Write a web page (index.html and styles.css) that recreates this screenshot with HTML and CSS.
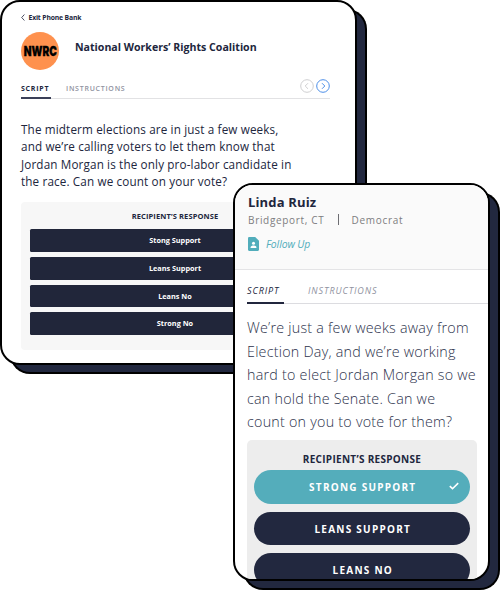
FILE: index.html
```html
<!DOCTYPE html>
<html lang="en">

<head>
    <meta charset="utf-8">
    <title>Phone Bank</title>
    <link rel="stylesheet" href="styles.css">
</head>

<body>
    <div class="canvas">
        <div class="card desktop">
            <a class="exit">
                <svg width="4" height="7" viewBox="0 0 4 7"><path d="M3.4 .5 .7 3.5l2.7 3" /></svg>
                <span>Exit Phone Bank</span>
            </a>
            <div class="org">
                <div class="logo"><span>NWRC</span></div>
                <h1>National Workers’ Rights Coalition</h1>
            </div>
            <div class="tabs">
                <span class="tab active">SCRIPT</span>
                <span class="tab">INSTRUCTIONS</span>
                <div class="arrows">
                    <svg class="prev" width="14" height="14" viewBox="0 0 14 14"><circle cx="7" cy="7" r="6.3" /><path d="M8 4.2 5.2 7 8 9.8" /></svg>
                    <svg class="next" width="14" height="14" viewBox="0 0 14 14"><circle cx="7" cy="7" r="6.3" /><path d="M6 4.2 8.8 7 6 9.8" /></svg>
                </div>
            </div>
            <p class="script">The midterm elections are in just a few weeks,<br>and we’re calling voters to let them know that<br>Jordan Morgan is the only pro-labor candidate in<br>the race. Can we count on your vote?</p>
            <div class="responses">
                <h2>RECIPIENT’S RESPONSE</h2>
                <div class="option">Stong Support</div>
                <div class="option">Leans Support</div>
                <div class="option">Leans No</div>
                <div class="option">Strong No</div>
            </div>
        </div>

        <div class="card mobile">
            <div class="screen">
                <div class="voter">
                    <h1>Linda Ruiz</h1>
                    <div class="info"><span class="city">Bridgeport, CT</span><i></i><span class="party">Democrat</span></div>
                    <div class="follow">
                        <svg width="11" height="14" viewBox="0 0 11 14"><path fill="#51adbb" d="M1.2 0h6L11 3.8v8.8c0 .8-.5 1.4-1.2 1.4H1.2C.5 14 0 13.4 0 12.6V1.4C0 .6.5 0 1.2 0z" /><circle cx="5.5" cy="6.3" r="1.5" fill="#fff" /><path fill="#fff" d="M2.6 11v-.8c0-1.1 1.8-1.7 2.9-1.7s2.9.6 2.9 1.7v.8z" /></svg>
                        <span>Follow Up</span>
                    </div>
                </div>
                <div class="tabs">
                    <span class="tab active">SCRIPT</span>
                    <span class="tab">INSTRUCTIONS</span>
                </div>
                <p class="script">We’re just a few weeks away from<br>Election Day, and we’re working<br>hard to elect Jordan Morgan so we<br>can hold the Senate. Can we<br>count on you to vote for them?</p>
                <div class="responses">
                    <h2>RECIPIENT’S RESPONSE</h2>
                    <div class="option selected">STRONG SUPPORT
                        <svg class="check" width="10" height="8" viewBox="0 0 10 8"><path d="M.8 4.2 3.5 6.7 9.2 1.1" /></svg>
                    </div>
                    <div class="option">LEANS SUPPORT</div>
                    <div class="option">LEANS NO</div>
                </div>
            </div>
        </div>
    </div>
</body>

</html>
```
FILE: styles.css
```css
* {
    box-sizing: border-box;
}

body {
    margin: 0;
    background: #fff;
    font-family: "Open Sans", sans-serif;
    color: #21263d;
}

h1,
h2,
p {
    margin: 0;
}

svg {
    display: block;
    fill: none;
}

.canvas {
    position: relative;
    width: 500px;
    height: 590px;
    overflow: hidden;
}

.card {
    border: 2px solid #000;
    background: #fff;
    box-shadow: 10px 9px 0 -2px #22283f, 10px 9px 0 0 #000;
}

.desktop {
    width: 357px;
    height: 365px;
    border-radius: 20px;
    padding: 10px 25px 0 19px;
}

.exit {
    display: flex;
    align-items: center;
    gap: 3.5px;
    height: 11px;
    font-size: 6.8px;
    font-weight: 700;
    letter-spacing: -0.15px;
}

.exit svg {
    stroke: #21263d;
    stroke-width: .8;
}

.org {
    display: flex;
    gap: 16px;
    margin-top: 9px;
}

.logo {
    display: flex;
    align-items: center;
    justify-content: center;
    width: 38px;
    height: 38px;
    border-radius: 50%;
    background: #fe914e;
    color: #000;
    font: 900 13px/1 Inter, sans-serif;
}

.logo span {
    transform: scaleX(.78);
    -webkit-text-stroke: .3px #000;
}

.org h1 {
    font-size: 10.6px;
    font-weight: 700;
    line-height: 30px;
}

.tabs {
    display: flex;
    color: #8f92a0;
    font-weight: 600;
    white-space: nowrap;
}

.tab.active {
    color: #21263d;
}

.desktop .tabs {
    height: 29px;
    width: 309px;
    padding-top: 11px;
    gap: 15px;
    font-size: 7px;
    line-height: 15px;
    letter-spacing: .75px;
    box-shadow: inset 0 -1px #e2e2e4;
}

.desktop .tab.active {
    width: 30px;
    border-bottom: 2px solid #3b4058;
    font-weight: 700;
}

.arrows {
    display: flex;
    gap: 2.5px;
    margin: -2px 0 0 auto;
}

.arrows svg {
    stroke-width: 1;
}

.prev {
    stroke: #cfcfd1;
}

.next {
    stroke: #4d8fe8;
}

.desktop .script {
    margin-top: 22px;
    font-size: 11.7px;
    line-height: 17.3px;
    letter-spacing: .14px;
    white-space: nowrap;
}

.desktop .responses {
    width: 308px;
    height: 148px;
    margin-top: 12px;
    padding: 9px;
    border-radius: 4px;
    background: #f7f7f7;
    text-align: center;
}

.desktop .responses h2 {
    height: 18px;
    font-size: 7.5px;
    line-height: 10px;
    letter-spacing: .12px;
}

.desktop .option {
    height: 22.7px;
    margin-bottom: 5px;
    border-radius: 1.5px;
    background: #21263a;
    color: #fff;
    font-size: 7.3px;
    font-weight: 700;
    line-height: 22px;
}

.mobile {
    position: absolute;
    left: 233px;
    top: 183px;
    width: 257px;
    height: 398px;
    border-radius: 20px;
}

.screen {
    height: 100%;
    overflow: hidden;
    border-radius: 18px;
}

.voter {
    height: 85px;
    padding: 8px 13px 0;
    border-bottom: 1px solid #e4e4e6;
    background: #fafafa;
}

.voter h1 {
    font-size: 13px;
    line-height: 19px;
    letter-spacing: .15px;
}

.info {
    display: flex;
    align-items: center;
    height: 15px;
    color: #7d7d80;
    font-size: 10px;
    letter-spacing: .68px;
}

.info i {
    width: 1px;
    height: 11px;
    margin: 0 13px;
    background: #6d6d72;
}

.follow {
    display: flex;
    align-items: center;
    gap: 7px;
    height: 14px;
    margin-top: 10px;
    color: #51adbb;
    font-size: 10.4px;
    font-style: italic;
}

.follow span {
    line-height: 14px;
    letter-spacing: -0.1px;
}

.mobile .tabs {
    height: 34px;
    margin-left: 12px;
    padding-top: 13px;
    gap: 24px;
    font-size: 9px;
    font-style: italic;
    font-weight: 400;
    line-height: 15px;
    letter-spacing: .9px;
    box-shadow: inset 0 -1px #dcdce0;
}

.mobile .tab.active {
    width: 37px;
    border-bottom: 2px solid #21263d;
}

.mobile .script {
    margin: 12px 0 0 12px;
    color: #2c324c;
    font-size: 14.3px;
    font-weight: 300;
    line-height: 23.5px;
    letter-spacing: .24px;
    white-space: nowrap;
}

.mobile .responses {
    width: 230px;
    height: 160px;
    margin: 6.5px 0 0 12px;
    padding: 11px 7px;
    border-radius: 5px;
    background: #ededed;
    text-align: center;
}

.mobile .responses h2 {
    height: 19px;
    font-size: 10px;
    line-height: 16px;
    letter-spacing: .3px;
}

.mobile .option {
    position: relative;
    height: 33.5px;
    margin-bottom: 8px;
    border-radius: 17px;
    background: #22283f;
    color: #fff;
    font-size: 10px;
    font-weight: 700;
    line-height: 34px;
    letter-spacing: 1.25px;
    text-indent: 1.5px;
}

.mobile .option.selected {
    background: #54adbb;
}

.check {
    position: absolute;
    right: 11px;
    top: 12px;
    stroke: #fff;
    stroke-width: 1.6;
}
```
